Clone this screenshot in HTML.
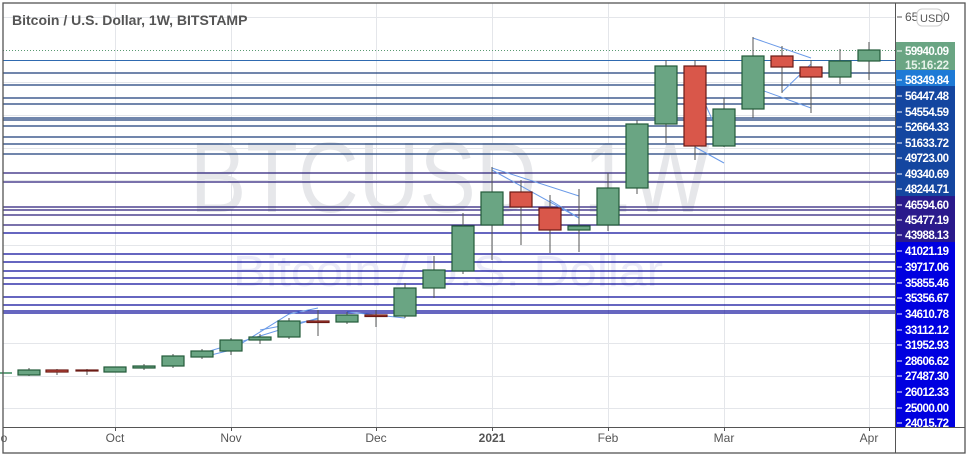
<!DOCTYPE html><html><head><style>body{margin:0;background:#fff;}svg{display:block;font-family:"Liberation Sans",sans-serif;}</style></head><body>
<svg width="972" height="457" xmlns="http://www.w3.org/2000/svg">
<rect width="972" height="457" fill="#fff"/>
<g stroke="#e4e6ea" stroke-width="1">
<line x1="115.5" y1="3" x2="115.5" y2="427"/><line x1="231.5" y1="3" x2="231.5" y2="427"/><line x1="376.5" y1="3" x2="376.5" y2="427"/><line x1="492.5" y1="3" x2="492.5" y2="427"/><line x1="608.5" y1="3" x2="608.5" y2="427"/><line x1="724.5" y1="3" x2="724.5" y2="427"/><line x1="869.5" y1="3" x2="869.5" y2="427"/>
<line x1="3" y1="17.5" x2="895" y2="17.5"/><line x1="3" y1="82.5" x2="895" y2="82.5"/><line x1="3" y1="115.5" x2="895" y2="115.5"/><line x1="3" y1="148.5" x2="895" y2="148.5"/><line x1="3" y1="180.5" x2="895" y2="180.5"/><line x1="3" y1="245.5" x2="895" y2="245.5"/><line x1="3" y1="343.5" x2="895" y2="343.5"/><line x1="3" y1="376.5" x2="895" y2="376.5"/><line x1="3" y1="408.5" x2="895" y2="408.5"/>
</g>
<text x="190" y="212" font-size="100" fill="#e6e7ea" textLength="520" lengthAdjust="spacingAndGlyphs">BTCUSD, 1W</text>
<text x="233" y="286" font-size="44" fill="#ebebf8" textLength="430" lengthAdjust="spacingAndGlyphs">Bitcoin / U.S. Dollar</text>
<text x="12" y="25" font-size="14" font-weight="bold" fill="#555">Bitcoin / U.S. Dollar, 1W, BITSTAMP</text>
<line x1="3" y1="50.5" x2="895" y2="50.5" stroke="#5a9a72" stroke-dasharray="1,2"/>
<line x1="3" y1="60.5" x2="895" y2="60.5" stroke="#2f6ab0"/>
<g stroke="#1c3f7a" stroke-width="1.3">
<line x1="3" y1="73" x2="895" y2="73"/><line x1="3" y1="85" x2="895" y2="85"/><line x1="3" y1="98" x2="895" y2="98"/><line x1="3" y1="104" x2="895" y2="104"/><line x1="3" y1="118" x2="895" y2="118"/><line x1="3" y1="120" x2="895" y2="120"/><line x1="3" y1="126" x2="895" y2="126"/><line x1="3" y1="137" x2="895" y2="137"/><line x1="3" y1="144" x2="895" y2="144"/><line x1="3" y1="154" x2="895" y2="154"/></g>
<g stroke="#2a1f7a" stroke-width="1.3"><line x1="3" y1="173" x2="895" y2="173"/><line x1="3" y1="182" x2="895" y2="182"/><line x1="3" y1="207" x2="895" y2="207"/><line x1="3" y1="210" x2="895" y2="210"/><line x1="3" y1="215" x2="895" y2="215"/><line x1="3" y1="225" x2="895" y2="225"/></g>
<g stroke="#0a0a9a" stroke-width="1.3"><line x1="3" y1="233" x2="895" y2="233"/><line x1="3" y1="254" x2="895" y2="254"/><line x1="3" y1="262" x2="895" y2="262"/><line x1="3" y1="271" x2="895" y2="271"/><line x1="3" y1="278" x2="895" y2="278"/><line x1="3" y1="284" x2="895" y2="284"/><line x1="3" y1="297" x2="895" y2="297"/><line x1="3" y1="305" x2="895" y2="305"/><line x1="3" y1="311" x2="895" y2="311"/><line x1="3" y1="313" x2="895" y2="313"/></g>
<g stroke="#6a9ae8" stroke-width="1" fill="none">
<polyline points="203,357 231,350 289,314 318,308"/><polyline points="203,353 260,336 318,318"/><line x1="260" y1="330" x2="318" y2="319"/>
<polyline points="347,312 376,315 405,318"/>
<polyline points="492,168 579,196 579,218 550,200"/><line x1="492" y1="170" x2="579" y2="218"/>
<polyline points="695,81 724,146"/><line x1="695" y1="147" x2="724" y2="163"/>
<polyline points="753,38 811,58"/><polyline points="753,87 811,108"/><line x1="782" y1="92" x2="811" y2="64"/>
</g>
<g stroke="#555" stroke-width="1">
<line x1="29" y1="368" x2="29" y2="376"/><line x1="57" y1="369" x2="57" y2="375"/><line x1="87" y1="369" x2="87" y2="375"/><line x1="144" y1="364" x2="144" y2="370"/><line x1="173" y1="354" x2="173" y2="368"/><line x1="202" y1="349" x2="202" y2="359"/><line x1="231" y1="338" x2="231" y2="355"/><line x1="260" y1="334" x2="260" y2="344"/><line x1="289" y1="318" x2="289" y2="339"/><line x1="318" y1="310" x2="318" y2="336"/><line x1="347" y1="312" x2="347" y2="324"/><line x1="376" y1="310" x2="376" y2="327"/><line x1="405" y1="283" x2="405" y2="318"/><line x1="434" y1="256" x2="434" y2="298"/><line x1="463" y1="213" x2="463" y2="274"/><line x1="492" y1="167" x2="492" y2="260"/><line x1="521" y1="180" x2="521" y2="245"/><line x1="550" y1="195" x2="550" y2="253"/><line x1="579" y1="189" x2="579" y2="252"/><line x1="608" y1="173" x2="608" y2="231"/><line x1="637" y1="120" x2="637" y2="194"/><line x1="666" y1="60" x2="666" y2="143"/><line x1="695" y1="60" x2="695" y2="160"/><line x1="724" y1="98" x2="724" y2="147"/><line x1="753" y1="37" x2="753" y2="118"/><line x1="782" y1="46" x2="782" y2="93"/><line x1="811" y1="60" x2="811" y2="113"/><line x1="840" y1="49" x2="840" y2="84"/><line x1="869" y1="42" x2="869" y2="80"/>
</g>
<g fill="#6aa583" stroke="#235a3a" stroke-width="1.2">
<rect x="18" y="370" width="22" height="5"/><rect x="104" y="367" width="22" height="5"/><rect x="133" y="366" width="22" height="2"/><rect x="162" y="356" width="22" height="10"/><rect x="191" y="351" width="22" height="6"/><rect x="220" y="340" width="22" height="11"/><rect x="249" y="337" width="22" height="3"/><rect x="278" y="321" width="22" height="16"/><rect x="336" y="315" width="22" height="7"/><rect x="394" y="288" width="22" height="28"/><rect x="423" y="270" width="22" height="18"/><rect x="452" y="226" width="22" height="45"/><rect x="481" y="192" width="22" height="33"/><rect x="568" y="226" width="22" height="4"/><rect x="597" y="188" width="22" height="37"/><rect x="626" y="124" width="22" height="64"/><rect x="655" y="66" width="22" height="58"/><rect x="713" y="109" width="22" height="37"/><rect x="742" y="56" width="22" height="53"/><rect x="829" y="61" width="22" height="16"/><rect x="858" y="50" width="22" height="11"/>
</g>
<g fill="#d9574a" stroke="#6b1a14" stroke-width="1.2">
<rect x="46" y="370" width="22" height="2"/><rect x="76" y="370" width="22" height="1"/><rect x="307" y="321" width="22" height="1.5"/><rect x="365" y="315" width="22" height="1.5"/><rect x="510" y="192" width="22" height="15"/><rect x="539" y="208" width="22" height="22"/><rect x="684" y="66" width="22" height="80"/><rect x="771" y="56" width="22" height="11"/><rect x="800" y="67" width="22" height="10"/>
</g>
<rect x="0" y="372" width="12" height="2" fill="#6aa583"/>
<rect x="895" y="42" width="60" height="28" fill="#6aa583"/>
<rect x="895" y="70" width="60" height="16" fill="#1e7ad6"/>
<rect x="895" y="86" width="60" height="110" fill="#1446a0"/>
<rect x="895" y="196" width="60" height="46" fill="#2a1a8c"/>
<rect x="895" y="242" width="60" height="185" fill="#0000e0"/>
<g font-size="11.5" font-weight="bold" fill="#fff" lengthAdjust="spacingAndGlyphs">
<text x="905" y="55" textLength="44">59940.09</text><text x="905" y="69" textLength="44" fill="#e6f2ea">15:16:22</text>
<text x="905" y="84" textLength="44">58349.84</text><text x="905" y="100" textLength="44">56447.48</text><text x="905" y="116" textLength="44">54554.59</text><text x="905" y="131" textLength="44">52664.33</text><text x="905" y="147" textLength="44">51633.72</text><text x="905" y="162" textLength="44">49723.00</text><text x="905" y="178" textLength="44">49340.69</text><text x="905" y="193" textLength="44">48244.71</text><text x="905" y="209" textLength="44">46594.60</text><text x="905" y="224" textLength="44">45477.19</text><text x="905" y="239" textLength="44">43988.13</text><text x="905" y="255" textLength="44">41021.19</text><text x="905" y="271" textLength="44">39717.06</text><text x="905" y="287" textLength="44">35855.46</text><text x="905" y="302" textLength="44">35356.67</text><text x="905" y="318" textLength="44">34610.78</text><text x="905" y="334" textLength="44">33112.12</text><text x="905" y="349" textLength="44">31952.93</text><text x="905" y="365" textLength="44">28606.62</text><text x="905" y="380" textLength="44">27487.30</text><text x="905" y="396" textLength="44">26012.33</text><text x="905" y="412" textLength="44">25000.00</text><text x="905" y="427" textLength="44">24015.72</text>
</g>
<g stroke="#fff" stroke-width="1"><line x1="897" y1="51" x2="902" y2="51"/><line x1="897" y1="80" x2="902" y2="80"/><line x1="897" y1="96" x2="902" y2="96"/><line x1="897" y1="112" x2="902" y2="112"/><line x1="897" y1="127" x2="902" y2="127"/><line x1="897" y1="143" x2="902" y2="143"/><line x1="897" y1="158" x2="902" y2="158"/><line x1="897" y1="174" x2="902" y2="174"/><line x1="897" y1="189" x2="902" y2="189"/><line x1="897" y1="205" x2="902" y2="205"/><line x1="897" y1="220" x2="902" y2="220"/><line x1="897" y1="235" x2="902" y2="235"/><line x1="897" y1="251" x2="902" y2="251"/><line x1="897" y1="267" x2="902" y2="267"/><line x1="897" y1="283" x2="902" y2="283"/><line x1="897" y1="298" x2="902" y2="298"/><line x1="897" y1="314" x2="902" y2="314"/><line x1="897" y1="330" x2="902" y2="330"/><line x1="897" y1="345" x2="902" y2="345"/><line x1="897" y1="361" x2="902" y2="361"/><line x1="897" y1="376" x2="902" y2="376"/><line x1="897" y1="392" x2="902" y2="392"/><line x1="897" y1="408" x2="902" y2="408"/><line x1="897" y1="423" x2="902" y2="423"/></g>
<line x1="897" y1="17" x2="902" y2="17" stroke="#555"/>
<text x="905" y="21" font-size="12" fill="#555">65</text>
<rect x="917" y="9" width="25" height="17" rx="5" fill="#fff" stroke="#ccc"/>
<text x="920" y="22" font-size="11" fill="#555">USD</text>
<text x="943" y="21" font-size="12" fill="#555">0</text>
<line x1="895.5" y1="3" x2="895.5" y2="453" stroke="#555"/>
<line x1="3" y1="427.5" x2="965" y2="427.5" stroke="#555"/>
<rect x="3" y="3" width="962" height="450" fill="none" stroke="#555" stroke-width="1.3"/>
<g stroke="#555"><line x1="115.5" y1="427" x2="115.5" y2="431"/><line x1="231.5" y1="427" x2="231.5" y2="431"/><line x1="376.5" y1="427" x2="376.5" y2="431"/><line x1="492.5" y1="427" x2="492.5" y2="431"/><line x1="608.5" y1="427" x2="608.5" y2="431"/><line x1="724.5" y1="427" x2="724.5" y2="431"/><line x1="869.5" y1="427" x2="869.5" y2="431"/></g>
<g font-size="12" fill="#555" text-anchor="middle">
<text x="4" y="442">o</text><text x="115" y="442">Oct</text><text x="231" y="442">Nov</text><text x="376" y="442">Dec</text><text x="492" y="442" font-weight="bold">2021</text><text x="608" y="442">Feb</text><text x="724" y="442">Mar</text><text x="869" y="442">Apr</text>
</g>
</svg>
</body></html>
